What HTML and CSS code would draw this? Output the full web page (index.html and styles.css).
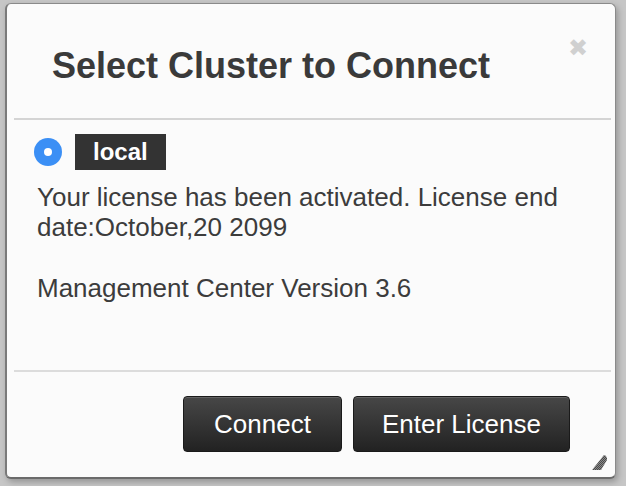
FILE: index.html
```html
<!DOCTYPE html>
<html>
<head>
<meta charset="utf-8">
<link rel="stylesheet" href="styles.css">
</head>
<body>
<div class="dialog">
  <div class="header">
    <h1 class="title">Select Cluster to Connect</h1>
    <span class="close">&#x2716;</span>
  </div>
  <div class="body">
    <div class="cluster">
      <span class="radio"><span class="dot"></span></span>
      <span class="tag">local</span>
    </div>
    <p class="text">Your license has been activated. License end date:October,20 2099</p>
    <p class="text version">Management Center Version 3.6</p>
  </div>
  <div class="footer">
    <button class="btn btn-connect">Connect</button>
    <button class="btn btn-license">Enter License</button>
  </div>
  <svg class="grip" width="18" height="18" viewBox="0 0 18 18">
    <defs>
      <pattern id="chk" width="2" height="2" patternUnits="userSpaceOnUse">
        <rect width="2" height="2" fill="#8a8a8a"/>
        <rect width="1" height="1" fill="#4a4a4a"/>
        <rect x="1" y="1" width="1" height="1" fill="#4a4a4a"/>
      </pattern>
    </defs>
    <path d="M13 2 Q15 2 16 5 L16 7 L10 17 L1 17 Z" fill="url(#chk)"/>
  </svg>
</div>
</body>
</html>
```
FILE: styles.css
```css
html, body {
  margin: 0;
  padding: 0;
}
body {
  background: #c6c6c6;
  width: 626px;
  height: 486px;
  padding: 3px 0 0 5px;
  box-sizing: border-box;
  font-family: "Liberation Sans", Arial, sans-serif;
  overflow: hidden;
}
.dialog {
  position: relative;
  width: 611px;
  height: 476px;
  box-sizing: border-box;
  background: #fbfbfb;
  border: 1px solid #8a8a8a;
  border-left: 2px solid #7a7a7a;
  border-bottom: 2px solid #6a6a6a;
  border-radius: 6px;
  box-shadow: 2px 3px 6px rgba(0,0,0,0.25);
  display: flex;
  flex-direction: column;
  padding: 0 4px;
}
.header {
  position: relative;
  height: 114px;
  border-bottom: 2px solid #d4d4d4;
  margin-left: 3px;
  display: flex;
  align-items: flex-start;
}
.title {
  margin: 42px 0 0 38px;
  font-size: 36px;
  font-weight: bold;
  color: #3a3a3a;
  line-height: 40px;
}
.close {
  position: absolute;
  right: 23px;
  top: 32px;
  font-size: 24px;
  color: #d0d0d0;
  line-height: 24px;
}
.body {
  height: 252px;
  padding: 14px 0 0 20px;
  box-sizing: border-box;
  border-bottom: 2px solid #dcdcdc;
  margin-left: 3px;
}
.cluster {
  display: flex;
  align-items: center;
  gap: 13px;
}
.radio {
  width: 28px;
  height: 28px;
  border-radius: 50%;
  background: #3b8ff5;
  display: flex;
  align-items: center;
  justify-content: center;
}
.dot {
  width: 8px;
  height: 8px;
  border-radius: 50%;
  background: #fff;
}
.tag {
  background: #333;
  color: #fff;
  font-weight: bold;
  font-size: 24px;
  height: 36px;
  line-height: 36px;
  padding: 0 18px;
}
.text {
  margin: 12px 0 0 3px;
  font-size: 26px;
  line-height: 30px;
  color: #3c3c3c;
  width: 560px;
}
.version {
  margin-top: 31px;
}
.footer {
  display: flex;
  justify-content: flex-end;
  gap: 11px;
  padding: 24px 41px 0 0;
}
.btn {
  height: 56px;
  padding: 0;
  font-family: "Liberation Sans", Arial, sans-serif;
  font-size: 26px;
  color: #fff;
  background: linear-gradient(#474747, #222);
  border: 1px solid #1a1a1a;
  border-radius: 4px;
  box-shadow: inset 0 1px 0 rgba(255,255,255,0.15);
}
.btn-connect {
  width: 159px;
}
.btn-license {
  width: 217px;
}
.grip {
  position: absolute;
  right: 6px;
  bottom: 6px;
}
```
